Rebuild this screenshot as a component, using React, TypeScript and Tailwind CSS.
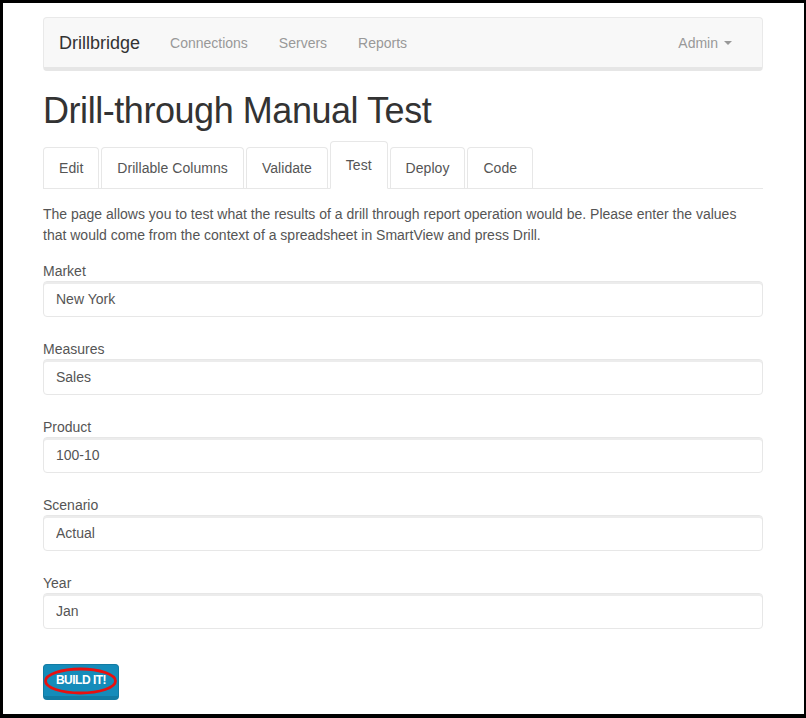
import React from 'react';

const tabs = ['Edit', 'Drillable Columns', 'Validate', 'Test', 'Deploy', 'Code'];

const fields = [
  { label: 'Market', value: 'New York' },
  { label: 'Measures', value: 'Sales' },
  { label: 'Product', value: '100-10' },
  { label: 'Scenario', value: 'Actual' },
  { label: 'Year', value: 'Jan' },
];

const App: React.FC = () => {
  return (
    <div className="w-[806px] h-[718px] box-border overflow-hidden bg-white border-solid border-black border-t-[3px] border-l-[3px] border-r-[2px] border-b-[4px] font-['Liberation_Sans',Arial,sans-serif] text-[14px] text-[#555]">
      <div className="w-[720px] ml-[40px] pt-[14px]">
        <nav className="h-[54px] box-border flex items-center bg-[#f8f8f8] border border-[#e9e9e9] border-b-[4px] border-b-[#e6e6e6] rounded-[4px]">
          <span className="px-[15px] text-[18px] text-[#333] leading-5">Drillbridge</span>
          <span className="px-[15px] text-[#999] leading-5">Connections</span>
          <span className="pl-[16px] pr-[15px] text-[#999] leading-5">Servers</span>
          <span className="pl-[16px] pr-[15px] text-[#999] leading-5">Reports</span>
          <span className="ml-auto mr-[15px] px-[15px] text-[#999] leading-5 flex items-center">
            Admin
            <span className="inline-block ml-[6px] w-0 h-0 border-x-[4px] border-x-transparent border-t-[4px] border-t-[#999]"></span>
          </span>
        </nav>

        <h1 className="mt-[20px] mb-[10px] text-[36px] leading-[1.1] text-[#333] tracking-[-0.45px]">Drill-through Manual Test</h1>

        <ul className="flex items-end border-b border-[#e7e7e7]">
          {tabs.map((t) =>
            t === 'Test' ? (
              <li
                key={t}
                className="mr-[2px] -mb-px h-[48px] box-border px-[15px] pt-[13px] leading-5 bg-white border border-[#e7e7e7] border-b-white rounded-t-[4px] text-[#555]"
              >
                {t}
              </li>
            ) : (
              <li
                key={t}
                className="mr-[2px] h-[41px] box-border px-[15px] pt-[10px] leading-5 bg-white border border-b-0 border-[#e7e7e7] rounded-t-[4px] text-[#555] tracking-[0.05px]"
              >
                {t}
              </li>
            )
          )}
        </ul>

        <p className="mt-[15px] leading-[21px]">
          The page allows you to test what the results of a drill through report operation would be. Please enter the values that would come from the context of a spreadsheet in SmartView and press Drill.
        </p>

        <div className="mt-[15px] space-y-[22px]">
          {fields.map((f) => (
            <div key={f.label}>
              <label className="block leading-5">{f.label}</label>
              <input
                readOnly
                defaultValue={f.value}
                className="block w-full h-[36px] box-border px-[12px] border border-[#e7e7e7] rounded-[4px] shadow-[inset_0_2px_0_rgba(0,0,0,0.075)] text-[#555] outline-none"
              />
            </div>
          ))}
        </div>

        <button className="relative mt-[35px] w-[76px] h-[36px] box-border bg-[#158cba] border border-[#127ba3] border-b-[4px] rounded-[4px] text-white font-bold text-[12px] tracking-[-0.5px] leading-none">
          BUILD IT!
          <svg className="absolute left-0 top-0 overflow-visible pointer-events-none" width="74" height="31">
            <ellipse cx="36.5" cy="16" rx="35" ry="12" fill="none" stroke="#e8100f" strokeWidth="2.8" />
          </svg>
        </button>
      </div>
    </div>
  );
};

export default App;
